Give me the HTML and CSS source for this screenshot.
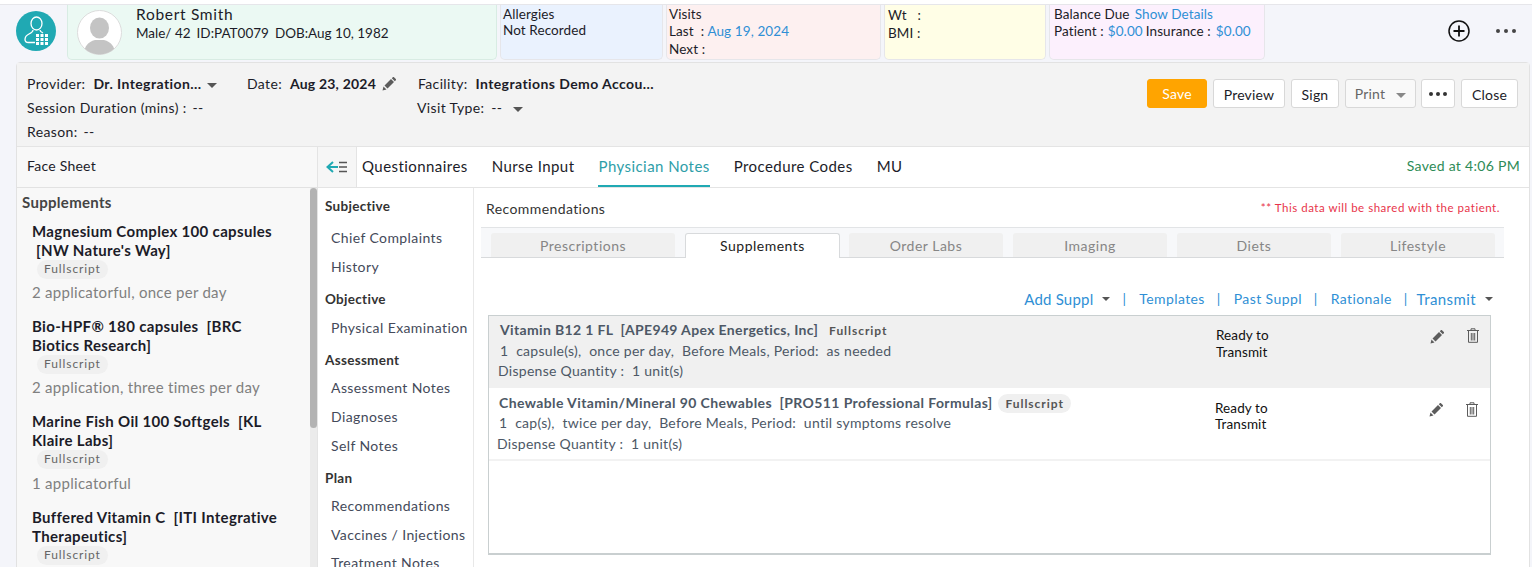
FILE: index.html
```html
<!DOCTYPE html>
<html lang="en">
<head>
<meta charset="utf-8">
<title>Encounter</title>
<link rel="stylesheet" href="styles.css">
</head>
<body>
<div class="page">
  <header class="patient-bar">
    <svg class="app-icon" viewBox="0 0 40 40" width="40" height="40">
      <circle cx="20" cy="20" r="20" fill="#20a9b3"/>
      <g fill="none" stroke="#fff" stroke-width="1.3">
        <ellipse cx="20.5" cy="12.5" rx="5.5" ry="6.5"/>
        <path d="M17 19c0 2-1 2.500-4 4-2.500 1.200-4 3-4 5.500 0 2 1.500 3 3.500 3H19"/>
        <path d="M24 19c0 1.500 1 2 3 3"/>
      </g>
      <g fill="#fff">
        <rect x="20" y="23" width="3" height="3"/><rect x="24.500" y="23" width="3" height="3"/><rect x="29" y="23" width="3" height="3"/>
        <rect x="20" y="27" width="3" height="3"/><rect x="24.500" y="27" width="3" height="3"/><rect x="29" y="27" width="3" height="3"/>
        <rect x="20" y="31" width="3" height="3"/><rect x="24.500" y="31" width="3" height="3"/><rect x="29" y="31" width="3" height="3"/>
      </g>
    </svg>
    <section class="card card-green">
      <svg class="avatar" viewBox="0 0 45 45" width="45" height="45">
        <defs><clipPath id="av"><circle cx="22.500" cy="22.500" r="22"/></clipPath></defs>
        <circle cx="22.500" cy="22.500" r="22" fill="#fff" stroke="#dcdcdc"/>
        <g clip-path="url(#av)" fill="#c4c4c4">
          <ellipse cx="22.500" cy="18" rx="9.500" ry="10.500"/>
          <path d="M7 45c0-9 4-13 11-15h9c7 2 11 6 11 15z"/>
        </g>
      </svg>
      <div class="patient-text">
        <div class="patient-name">Robert Smith</div>
        <div class="patient-meta"><span>Male/ 42</span><span>ID:PAT0079</span><span>DOB:Aug 10, 1982</span></div>
      </div>
    </section>
    <section class="card card-blue">
      <div class="l16">Allergies</div>
      <div class="l16">Not Recorded</div>
    </section>
    <section class="card card-pink">
      <div class="l16">Visits</div>
      <div class="l18">Last &nbsp;:&nbsp;<a class="link">Aug 19, 2024</a></div>
      <div class="l18">Next :</div>
    </section>
    <section class="card card-yellow">
      <div class="l18">Wt &nbsp; :</div>
      <div class="l18">BMI :</div>
    </section>
    <section class="card card-purple">
      <div class="l16">Balance Due &nbsp;<a class="link show-link">Show Details</a></div>
      <div class="l18 money"><span>Patient :</span><a class="link m-a">$0.00</a><span class="m-b">Insurance :</span><a class="link m-c">$0.00</a></div>
    </section>
    <div class="bar-tools">
      <svg viewBox="0 0 24 24" width="24" height="24"><circle cx="12" cy="12" r="10" fill="none" stroke="#111" stroke-width="1.500"/><path d="M12 6.500v11M6.500 12h11" stroke="#111" stroke-width="1.800"/></svg>
      <svg viewBox="0 0 22 6" width="22" height="6"><circle cx="3" cy="3" r="2" fill="#444"/><circle cx="11" cy="3" r="2" fill="#444"/><circle cx="19" cy="3" r="2" fill="#444"/></svg>
    </div>
  </header>

  <main class="panel">
    <section class="toolbar">
      <div class="meta">
        <div class="meta-row">
          <div class="field f-provider">Provider:&nbsp; <b>Dr. Integration...</b><i class="caret caret-meta"></i></div>
          <div class="field f-date">Date:&nbsp; <b>Aug 23, 2024</b>
            <svg class="pencil" viewBox="0 0 14 14" width="14" height="14"><path d="M0.500 13.500l1-4 3 3zM2.500 8.500l6.500-6.500 3 3-6.500 6.500zM9.800 1.200l1-1a.8.8 0 0 1 1.200 0l1.800 1.800a.8.8 0 0 1 0 1.200l-1 1z" fill="#5c5c5c"/></svg>
          </div>
          <div class="field f-facility">Facility:&nbsp; <b>Integrations Demo Accou...</b></div>
        </div>
        <div class="meta-row">
          <div class="field f-session">Session Duration (mins) : &nbsp;<span class="dash">--</span></div>
          <div class="field f-visit">Visit Type: &nbsp;<span class="dash-s">--</span> <i class="caret caret-visit"></i></div>
        </div>
        <div class="meta-row">
          <div class="field">Reason: &nbsp;<span class="dash">--</span></div>
        </div>
      </div>
      <div class="actions">
        <button class="btn btn-save">Save</button>
        <button class="btn btn-low w-preview">Preview</button>
        <button class="btn btn-low w-sign">Sign</button>
        <button class="btn btn-print">Print<i class="caret caret-print"></i></button>
        <button class="btn w-dots"><svg viewBox="0 0 20 6" width="20" height="6"><circle cx="3" cy="3" r="2" fill="#333"/><circle cx="10" cy="3" r="2" fill="#333"/><circle cx="17" cy="3" r="2" fill="#333"/></svg></button>
        <button class="btn btn-low w-close">Close</button>
      </div>
    </section>

    <section class="workspace">
      <aside class="left">
        <div class="left-head">Face Sheet</div>
        <div class="left-body">
          <div class="left-list">
            <h3 class="left-title">Supplements</h3>
            <article class="supp">
              <div class="supp-name">Magnesium Complex 100 capsules<br>&nbsp;[NW Nature's Way]</div>
              <span class="badge">Fullscript</span>
              <div class="supp-sig">2 applicatorful, once per day</div>
            </article>
            <article class="supp">
              <div class="supp-name">Bio-HPF® 180 capsules&nbsp; [BRC<br>Biotics Research]</div>
              <span class="badge">Fullscript</span>
              <div class="supp-sig">2 application, three times per day</div>
            </article>
            <article class="supp">
              <div class="supp-name">Marine Fish Oil 100 Softgels&nbsp; [KL<br>Klaire Labs]</div>
              <span class="badge">Fullscript</span>
              <div class="supp-sig">1 applicatorful</div>
            </article>
            <article class="supp">
              <div class="supp-name">Buffered Vitamin C&nbsp; [ITI Integrative<br>Therapeutics]</div>
              <span class="badge">Fullscript</span>
            </article>
          </div>
          <div class="scrollbar"><div class="thumb"></div></div>
        </div>
      </aside>

      <div class="right">
        <nav class="tabs">
          <div class="collapse">
            <svg viewBox="0 0 22 12" width="22" height="12"><path d="M7 1L1.500 6 7 11M2 6h10" fill="none" stroke="#20a9b3" stroke-width="2"/><path d="M13 1.500h8M13 6h8M13 10.500h8" stroke="#555" stroke-width="1.600"/></svg>
          </div>
          <a class="tab">Questionnaires</a>
          <a class="tab">Nurse Input</a>
          <a class="tab tab-active">Physician Notes</a>
          <a class="tab">Procedure Codes</a>
          <a class="tab">MU</a>
          <span class="saved">Saved at 4:06 PM</span>
        </nav>
        <div class="note-area">
          <nav class="sections">
            <h4>Subjective</h4>
            <a>Chief Complaints</a>
            <a>History</a>
            <h4>Objective</h4>
            <a>Physical Examination</a>
            <h4>Assessment</h4>
            <a>Assessment Notes</a>
            <a>Diagnoses</a>
            <a>Self Notes</a>
            <h4 class="h-plan">Plan</h4>
            <a>Recommendations</a>
            <a>Vaccines / Injections</a>
            <a class="last-link">Treatment Notes</a>
          </nav>
          <div class="content">
            <div class="content-head">
              <span class="content-title">Recommendations</span>
              <span class="shared">** This data will be shared with the patient.</span>
            </div>
            <div class="subtabs">
              <a class="subtab w-first">Prescriptions</a>
              <a class="subtab subtab-active">Supplements</a>
              <a class="subtab">Order Labs</a>
              <a class="subtab">Imaging</a>
              <a class="subtab">Diets</a>
              <a class="subtab">Lifestyle</a>
            </div>
            <div class="links">
              <a class="lnk-big">Add Suppl</a><i class="caret caret-link"></i><span class="sep">|</span>
              <a>Templates</a><span class="sep">|</span>
              <a>Past Suppl</a><span class="sep">|</span>
              <a>Rationale</a><span class="sep sep-t">|</span>
              <a class="lnk-big lnk-t">Transmit</a><i class="caret caret-link caret-last"></i>
            </div>
            <div class="rows">
              <article class="row row-grey">
                <div class="row-main">
                  <div class="row-title">Vitamin B12 1 FL&nbsp; [APE949 Apex Energetics, Inc] <span class="tag tag-plain">Fullscript</span></div>
                  <div class="row-sig">1&nbsp; capsule(s),&nbsp; once per day,&nbsp; Before Meals, Period:&nbsp; as needed</div>
                  <div class="row-qty">Dispense Quantity :&nbsp; 1 unit(s)</div>
                </div>
                <div class="row-status">Ready to<br>Transmit</div>
                <div class="row-icons">
                  <svg class="ic-pencil" viewBox="0 0 14 14" width="14" height="14"><path d="M0.500 13.500l1-4 3 3zM2.500 8.500l6.500-6.500 3 3-6.500 6.500zM9.800 1.200l1-1a.8.8 0 0 1 1.200 0l1.800 1.800a.8.8 0 0 1 0 1.200l-1 1z" fill="#5c5c5c"/></svg>
                  <svg viewBox="0 0 12 15" width="12" height="15"><path d="M0 2.500h12M4 2V.8h4V2M1.500 3v11.300h9V3M4.300 5v7.500M6 5v7.500M7.700 5v7.500" fill="none" stroke="#5c5c5c" stroke-width="1"/></svg>
                </div>
              </article>
              <article class="row row-white">
                <div class="row-main">
                  <div class="row-title">Chewable Vitamin/Mineral 90 Chewables&nbsp; [PRO511 Professional Formulas] <span class="tag">Fullscript</span></div>
                  <div class="row-sig">1&nbsp; cap(s),&nbsp; twice per day,&nbsp; Before Meals, Period:&nbsp; until symptoms resolve</div>
                  <div class="row-qty">Dispense Quantity :&nbsp; 1 unit(s)</div>
                </div>
                <div class="row-status">Ready to<br>Transmit</div>
                <div class="row-icons">
                  <svg class="ic-pencil" viewBox="0 0 14 14" width="14" height="14"><path d="M0.500 13.500l1-4 3 3zM2.500 8.500l6.500-6.500 3 3-6.500 6.500zM9.800 1.200l1-1a.8.8 0 0 1 1.200 0l1.800 1.800a.8.8 0 0 1 0 1.200l-1 1z" fill="#5c5c5c"/></svg>
                  <svg viewBox="0 0 12 15" width="12" height="15"><path d="M0 2.500h12M4 2V.8h4V2M1.500 3v11.300h9V3M4.300 5v7.500M6 5v7.500M7.700 5v7.500" fill="none" stroke="#5c5c5c" stroke-width="1"/></svg>
                </div>
              </article>
            </div>
          </div>
        </div>
      </div>
    </section>
  </main>
</div>
</body>
</html>
```
FILE: styles.css
```css
* { box-sizing: border-box; }
html, body { margin: 0; padding: 0; height: 567px; overflow: hidden; }
body { font-family: Lato, "Noto Sans", sans-serif; font-size: 14px; color: #1c1c28; background: #f4f5fa; }
.page { height: 567px; overflow: hidden; border-top: 4px solid #fff; box-shadow: inset 0 1px 0 #eee; }
a { text-decoration: none; }
h3, h4 { margin: 0; }

/* patient bar */
.patient-bar { display: flex; height: 58px; padding-left: 16px; border-top: 1px solid #e6e6ea; }
.app-icon { margin: 6px 11px 0 0; flex: none; }
.card { height: 55px; margin-right: 3px; padding: 1px 2px; border: 1px solid #e6e6ea; border-top: 0; border-radius: 0 0 5px 5px; font-size: 13.500px; letter-spacing: .1px; overflow: hidden; flex: none; }
.card-green { width: 430px; background: #ebf9f3; display: flex; padding: 5px 9px; border-color: #d8ece3; }
.card-blue { width: 163px; background: #eaf2fe; }
.card-pink { width: 215px; background: #fdf0f0; }
.card-yellow { width: 162px; background: #fffee6; padding-left: 3px; }
.card-purple { width: 216px; background: #fcf0fd; padding-left: 4px; }
.avatar { flex: none; margin-right: 14px; }
.patient-text { margin-top: -5px; }
.patient-name { font-size: 15.500px; line-height: 19px; letter-spacing: .7px; }
.patient-meta { display: flex; gap: 6px; font-size: 13.500px; line-height: 18px; letter-spacing: 0; }
.l16 { line-height: 16px; }
.l18 { line-height: 18px; }
.link { color: #2f8fd5; }
.show-link { margin-left: -2px; }
.money { display: flex; }
.m-a { margin-left: 4px; }
.m-b { margin-left: 3px; }
.m-c { margin-left: 5px; }
.bar-tools { display: flex; align-items: center; gap: 24px; margin-left: 179px; height: 52px; }

/* panel */
.panel { margin: 0 2px 0 16px; border: 1px solid #e2e2e2; border-radius: 4px 4px 0 0; background: #fff; }
.toolbar { display: flex; height: 84px; background: #f3f3f3; border-bottom: 1px solid #e4e4e4; padding: 0 11px 0 10px; justify-content: space-between; }
.meta { padding-top: 10px; font-size: 14px; letter-spacing: .36px; }
.meta-row { display: flex; height: 24px; line-height: 22px; }
.meta b { font-weight: 700; letter-spacing: .42px; }
.f-provider { width: 220px; }
.f-date { width: 171px; }
.f-date b { letter-spacing: .2px; }
.f-session { width: 390px; }
.dash { margin-left: -2px; }
.dash-s { margin-left: -1px; }
.caret { display: inline-block; width: 0; height: 0; border-left: 5px solid transparent; border-right: 5px solid transparent; border-top: 5px solid #555; vertical-align: middle; }
.caret-meta { margin-left: 5px; }
.caret-visit { margin-left: 7px; }
.pencil { margin-left: 2px; vertical-align: -2px; }
.actions { display: flex; gap: 6px; padding-top: 16px; align-items: flex-start; }
.btn { height: 29px; padding: 0; font: 14px Lato, sans-serif; letter-spacing: .2px; color: #1c1c28; background: #fff; border: 1px solid #d8d8d8; border-radius: 3px; }
.btn-low { padding-top: 2px; }
.btn-save { width: 60px; background: #ffa400; border-color: #ffa400; color: #fff; }
.w-preview { width: 72px; }
.w-sign { width: 48px; }
.btn-print { width: 71px; background: #f9f9f9; color: #666; margin-right: -1px; }
.caret-print { margin-left: 11px; border-top-color: #888; }
.w-dots { width: 34px; display: flex; align-items: center; justify-content: center; }
.w-close { width: 57px; }

/* workspace */
.workspace { display: flex; }
.left { width: 301px; flex: none; border-right: 1px solid #e4e4e4; background: #f8f8f8; }
.left-head { height: 41px; line-height: 38px; padding-left: 10px; font-size: 14px; letter-spacing: .25px; border-bottom: 1px solid #e2e2e2; }
.left-body { display: flex; height: 400px; }
.left-list { width: 293px; flex: none; padding: 5px 0 0 5px; }
.left-title { font-size: 15px; line-height: 18px; font-weight: 700; color: #444; letter-spacing: .3px; margin-bottom: 10.700px; }
.supp { padding-left: 10px; height: 95.300px; }
.supp-name { font-size: 15px; line-height: 19px; font-weight: 700; color: #1c1c28; letter-spacing: .33px; }
.badge { display: inline-block; margin-left: 5px; padding: 0 7px; height: 19px; line-height: 18px; border-radius: 10px; background: #f0f0f0; font-size: 12px; letter-spacing: .9px; color: #666; vertical-align: top; }
.supp-sig { font-size: 15px; line-height: 20px; color: #808080; margin-top: 3.500px; letter-spacing: .28px; }
.scrollbar { width: 8px; background: #ebebeb; }
.thumb { width: 7px; height: 240px; border-radius: 4px; background: #b3b3b3; }

.right { flex: 1; min-width: 0; }
.tabs { display: flex; height: 41px; align-items: stretch; border-bottom: 1px solid #e4e4e4; }
.collapse { width: 39px; display: flex; align-items: center; justify-content: center; background: #f6f6f6; border-right: 1px solid #e4e4e4; margin-right: 5px; }
.tab { margin-right: 24px; font-size: 15px; line-height: 38px; letter-spacing: .44px; color: #1c1c28; }
.tab-active { color: #2e9ea8; border-bottom: 2px solid #20a9b3; }
.saved { margin-left: auto; margin-right: 9px; font-size: 14px; line-height: 38px; color: #2e8b57; letter-spacing: .3px; }

.note-area { display: flex; }
.sections { width: 156px; flex: none; height: 380px; border-right: 1px solid #e8e8e8; padding-left: 7px; overflow: hidden; display: flex; flex-direction: column; }
.sections h4 { font-size: 13.500px; font-weight: 700; color: #333; line-height: 18px; height: 18px; margin-top: 9px; letter-spacing: .3px; flex: none; }
.sections a { font-size: 14px; line-height: 20px; height: 20px; margin-top: 9px; padding-left: 6px; color: #444a5a; letter-spacing: .4px; flex: none; white-space: nowrap; }
.sections h4 + a { margin-top: 9.500px; }
.sections h4:first-child + a { margin-top: 13px; }
.sections h4:not(:first-child) { margin-top: 13px; }
.sections .h-plan + a { margin-top: 8.500px; }
.sections .last-link { margin-top: 8px; }

.content { flex: 1; min-width: 0; padding: 0 25px 0 7px; }
.content-head { display: flex; justify-content: space-between; height: 39px; padding: 12px 4px 0 5px; line-height: 18px; }
.content-title { font-size: 14px; letter-spacing: .4px; color: #333; }
.shared { font-size: 11.500px; line-height: 16px; letter-spacing: .52px; color: #e8344a; }
.subtabs { display: flex; height: 31px; padding: 5px 10px 0; gap: 10px; background: #f7f8fa; border-top: 1px solid #e2e4e6; border-bottom: 1px solid #d8dadc; }
.subtab { width: 154px; flex: none; height: 24px; line-height: 25px; text-align: center; font-size: 14px; letter-spacing: .5px; color: #868686; background: #f0f0f0; border-radius: 3px 3px 0 0; }
.w-first { width: 184px; }
.subtab-active { width: 155px; height: 25px; line-height: 23px; margin-right: -1px; color: #222; background: #fff; border: 1px solid #d8dadc; border-bottom: 0; }
.links { display: flex; justify-content: flex-end; align-items: center; height: 57px; padding: 24px 11px 0 0; font-size: 14px; color: #2f8fd5; letter-spacing: .4px; }
.links a { color: #2f8fd5; }
.lnk-big { font-size: 15px; letter-spacing: .2px; }
.links .lnk-t { letter-spacing: .4px; }
.sep { margin: 0 13px 0 12px; }
.sep-t { margin-right: 9px; }
.caret-link { margin-left: 9px; border-left-width: 4px; border-right-width: 4px; border-top: 4px solid #555; }
.caret-last { margin-left: 9px; }

.rows { margin-left: 7px; width: 1003px; height: 240px; border: 1px solid #c9cfd0; border-bottom-width: 2px; }
.row { display: flex; font-size: 14px; }
.row-grey { height: 72px; background: #f0f0f0; margin-bottom: 1px; }
.row-white { height: 72px; border-bottom: 2px solid #f2f2f2; }
.row-main { width: 727px; flex: none; padding: 4px 0 0 11px; }
.row-white .row-main { width: 726px; padding-left: 10px; }
.row-title { font-size: 14px; font-weight: 700; color: #4d5866; line-height: 19px; letter-spacing: .39px; white-space: nowrap; }
.row-grey .row-title { letter-spacing: .35px; }
.tag { display: inline-block; margin-left: 2px; padding: 0 7px; height: 19px; line-height: 19px; font-size: 12px; font-weight: 700; letter-spacing: .95px; color: #555; background: #f0f0f0; border-radius: 10px; }
.tag-plain { margin-left: 0; background: transparent; }
.row-sig, .row-qty { color: #4d5866; letter-spacing: .28px; line-height: 20px; }
.row-sig { margin-top: 1px; }
.row-qty { margin-left: -2px; }
.row-white .row-sig { margin-top: 0; }
.row-white .row-qty { margin-top: 1px; }
.row-status { width: 190px; flex: none; padding-top: 11px; font-size: 13.500px; line-height: 16.500px; letter-spacing: .1px; color: #111; }
.row-white .row-status { line-height: 16px; }
.row-icons { display: flex; gap: 23px; align-items: flex-start; padding-top: 12px; margin-left: 24px; }
.ic-pencil { margin-top: 2px; }
.row-white .row-icons { padding-top: 13px; }
.row-white .ic-pencil { margin-top: 1px; }
```
